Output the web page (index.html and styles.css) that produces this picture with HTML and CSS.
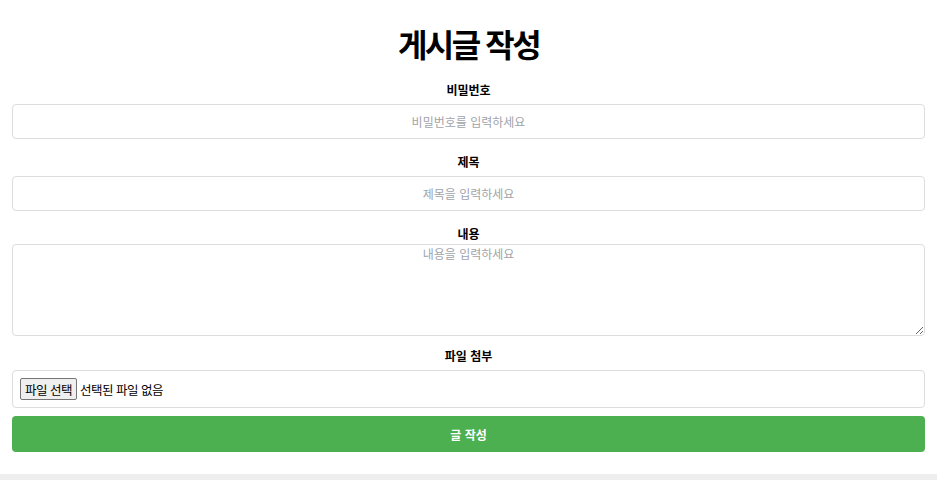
FILE: index.html
```html
<!DOCTYPE html>
<html lang="ko">
<head>
<meta charset="utf-8">
<title>게시글 작성</title>
<link rel="stylesheet" href="styles.css">
</head>
<body>
<div class="container">
  <h1 class="title">게시글 작성</h1>
  <form class="post-form">
    <div class="group">
      <label class="label" for="pw">비밀번호</label>
      <input class="field" id="pw" type="password" placeholder="비밀번호를 입력하세요">
    </div>
    <div class="group">
      <label class="label" for="subject">제목</label>
      <input class="field" id="subject" type="text" placeholder="제목을 입력하세요">
    </div>
    <div class="group group-area">
      <label class="label label-area" for="content">내용</label>
      <textarea class="field area" id="content" placeholder="내용을 입력하세요"></textarea>
    </div>
    <div class="group">
      <span class="label">파일 첨부</span>
      <div class="file-box">
        <input class="file-hidden" id="file" type="file">
        <label class="file-btn" for="file">파일 선택</label>
        <span class="file-name">선택된 파일 없음</span>
      </div>
    </div>
    <button class="submit" type="button">글 작성</button>
  </form>
</div>
</body>
</html>
```
FILE: styles.css
```css
html, body {
  margin: 0;
  background: #eeeeee;
}
body {
  font-family: "Noto Sans CJK KR", "Noto Sans", sans-serif;
  color: #000;
}
.container {
  background: #fff;
  padding: 20px 12px 22px;
}
.title {
  margin: 0 0 15px;
  font-size: 32px;
  line-height: 46px;
  font-weight: 700;
  text-align: center;
  letter-spacing: -2.5px;
}
.post-form {
  display: flex;
  flex-direction: column;
}
.group {
  display: flex;
  flex-direction: column;
  margin-bottom: 14px;
}
.group-area {
  margin-bottom: 11px;
}
.label {
  display: block;
  font-size: 12px;
  line-height: 18px;
  font-weight: 700;
  text-align: center;
  margin-bottom: 5px;
}
.label-area {
  margin-bottom: 1px;
}
.field {
  box-sizing: border-box;
  width: 100%;
  height: 35px;
  border: 1px solid #dddddd;
  border-radius: 4px;
  padding: 0 8px;
  font-family: "Noto Sans CJK KR", sans-serif;
  font-size: 12px;
  text-align: center;
  background: #fff;
  outline: none;
}
.field::placeholder {
  color: #a0a4aa;
}
.area {
  height: 92px;
  padding: 1px 8px;
  line-height: 16px;
  resize: vertical;
  display: block;
}
.file-box {
  box-sizing: border-box;
  height: 38px;
  border: 1px solid #dddddd;
  border-radius: 4px;
  padding: 0 7px;
  display: flex;
  align-items: center;
  gap: 3px;
}
.file-hidden {
  position: absolute;
  width: 1px;
  height: 1px;
  opacity: 0;
  overflow: hidden;
}
.file-btn {
  box-sizing: border-box;
  height: 22px;
  padding: 0 4px;
  display: flex;
  align-items: center;
  background: #efefef;
  border: 1px solid #767676;
  border-radius: 2px;
  font-size: 12.5px;
  letter-spacing: -0.5px;
  color: #000;
}
.file-name {
  font-size: 12.5px;
  letter-spacing: -0.5px;
}
.submit {
  margin-top: -6px;
  height: 36px;
  width: 100%;
  border: none;
  border-radius: 4px;
  background: #4caf50;
  color: #fff;
  font-family: "Noto Sans CJK KR", sans-serif;
  font-size: 12px;
  font-weight: 700;
}
```
